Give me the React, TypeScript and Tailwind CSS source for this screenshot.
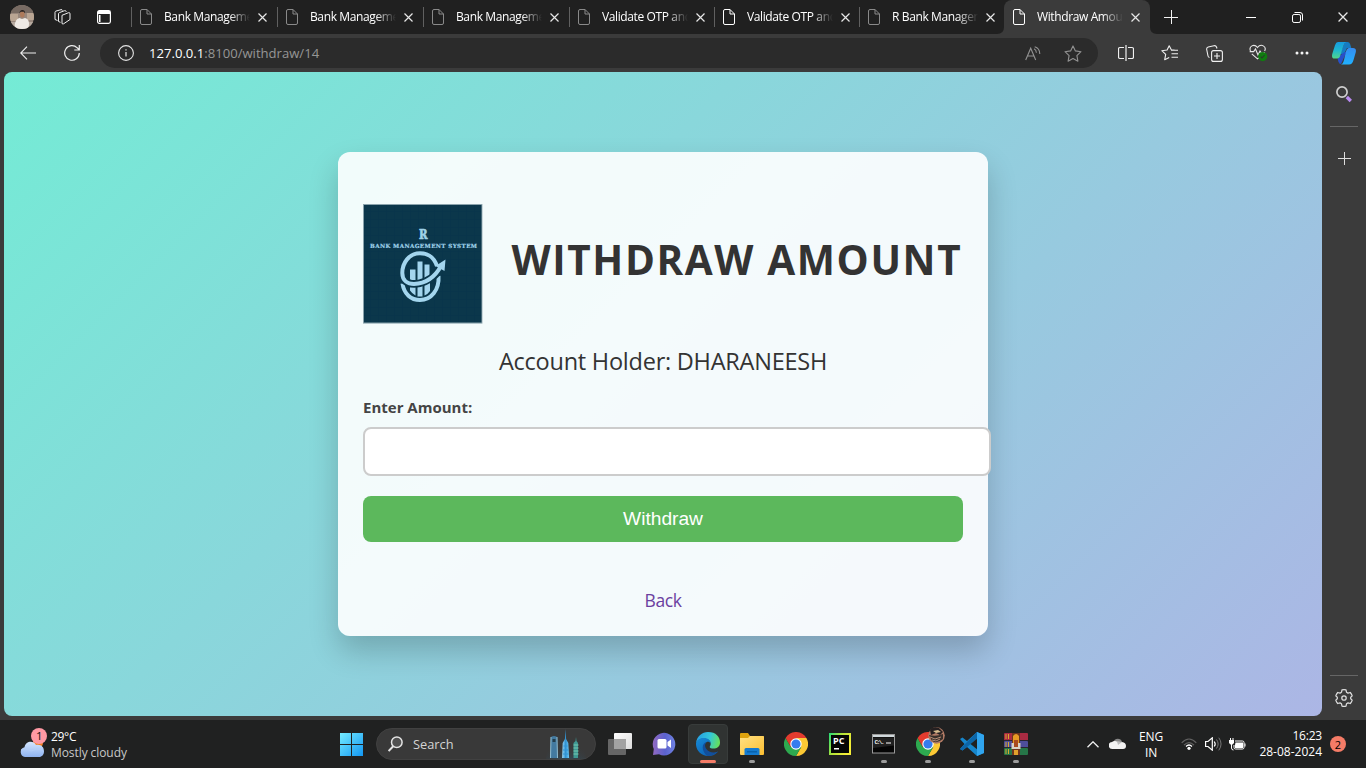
import type { ReactNode } from "react";

const tabs = [
  { title: "Bank Management", w: "w-[146px]", icon: "#8a8a8a" },
  { title: "Bank Management", w: "w-[146px]", icon: "#8a8a8a" },
  { title: "Bank Management", w: "w-[146px]", icon: "#8a8a8a" },
  { title: "Validate OTP and", w: "w-[145px]", icon: "#8a8a8a" },
  { title: "Validate OTP and", w: "w-[145px]", icon: "#ffffff" },
  { title: "R Bank Management", w: "w-[145px]", icon: "#8a8a8a" },
];

function DocIcon({ color }: { color: string }) {
  return (
    <svg width="12" height="16" viewBox="0 0 12 16" fill="none" stroke={color} className="shrink-0">
      <path d="M2 .5h5l4.5 4.5v9a1.5 1.5 0 0 1-1.5 1.5H2A1.5 1.5 0 0 1 .5 14V2A1.5 1.5 0 0 1 2 .5ZM7 .5V5h4.5" />
    </svg>
  );
}

function CloseIcon({ size = 9 }: { size?: number }) {
  return (
    <svg width={size} height={size} viewBox="0 0 9 9" stroke="#e8e8e8" strokeWidth="1.15" className="shrink-0">
      <path d="M.5.5l8 8M8.5.5l-8 8" />
    </svg>
  );
}

function TabBody({ title, icon }: { title: string; icon: string }) {
  return (
    <>
      <DocIcon color={icon} />
      <span className="ml-3 w-[86px] shrink-0 overflow-hidden whitespace-nowrap text-[12px] leading-[16px] tracking-[-0.38px] text-white [mask-image:linear-gradient(to_right,black_76%,transparent_100%)]">
        {title}
      </span>
      <span className="ml-2 flex">
        <CloseIcon />
      </span>
    </>
  );
}

function TabStrip() {
  return (
    <div className="flex h-[34px] bg-[#202020]">
      <div className="flex w-[131px] items-center">
        <svg width="24" height="24" viewBox="0 0 24 24" className="ml-[10px]">
          <defs>
            <clipPath id="avatar"><circle cx="12" cy="12" r="12" /></clipPath>
          </defs>
          <g clipPath="url(#avatar)">
            <rect width="24" height="24" fill="#98877c" />
            <rect width="24" height="8" fill="#776a62" />
            <path d="M0 9h8v7H0zM17 8h7v7h-7z" fill="#b9a593" />
            <path d="M0 17h24v7H0z" fill="#b7aaa0" />
            <path d="M5 24c-1-6 1-10 4.500-11l2.500 1 3-1c4 1 5 5 3 11Z" fill="#eee9e4" />
            <ellipse cx="12.300" cy="9.300" rx="2.300" ry="3.300" fill="#ad7a5b" />
            <path d="M9.600 8.500c-.8-4.500 6-5 5.500 0l-1.200-1.700H10.500Z" fill="#292321" />
          </g>
        </svg>
        <svg width="17" height="16" viewBox="0 0 17 16" fill="none" stroke="#eee" className="ml-[20px]">
          <path d="M8 6.300 14.500 3.700Q16 3.300 16 4.800V10.500L9.600 14.800Q8 15.600 8 14Z" />
          <path d="M4.500 12.500V4.800Q4.500 4 5.400 3.600L10.500 1.700Q12 1.300 12.300 2.800M1 10.500V3.300Q1 2.500 1.900 2.100L7 .7Q8.200.4 8.600 1.500M4.500 12.500l2 .8M1 10.500l2.500 1" />
        </svg>
        <svg width="14" height="14" viewBox="0 0 14 14" className="ml-[26px]">
          <rect x=".6" y=".6" width="12.800" height="12.800" rx="1.800" fill="none" stroke="#fff" strokeWidth="1.200" />
          <path d="M1 1h12v3H1zM2 5h1.500v7H2z" fill="#fff" />
        </svg>
      </div>
      {tabs.map((t, i) => (
        <div key={i} className={`flex shrink-0 items-center ${t.w}`}>
          <div className="mr-2 h-5 w-px bg-[#606060]" />
          <TabBody {...t} />
        </div>
      ))}
      <div className="relative flex w-[146px] shrink-0 items-center rounded-t-lg bg-[#3b3b3b] pl-[9px]">
        <svg width="7" height="7" viewBox="0 0 7 7" className="absolute -left-[7px] bottom-0"><path d="M7 0v7H0Q7 7 7 0Z" fill="#3b3b3b" /></svg>
        <svg width="7" height="7" viewBox="0 0 7 7" className="absolute -right-[7px] bottom-0"><path d="M0 0v7h7Q0 7 0 0Z" fill="#3b3b3b" /></svg>
        <TabBody title="Withdraw Amount" icon="#ffffff" />
      </div>
      <div className="flex flex-1 items-center">
        <svg width="14" height="14" viewBox="0 0 14 14" stroke="#f2f2f2" className="ml-[14px]"><path d="M7.500 0v14M0 7.500h14" /></svg>
        <svg width="10" height="10" viewBox="0 0 10 10" stroke="#fff" className="ml-[68px]"><path d="M0 5.500h10" /></svg>
        <svg width="11" height="11" viewBox="0 0 11 11" fill="none" stroke="#fff" className="ml-[36px]"><rect x=".5" y="2.500" width="8" height="8" rx="1.600" /><path d="M2.500.5h5.500a2.500 2.500 0 0 1 2.500 2.500v5.500" /></svg>
        <span className="ml-[35px] flex"><CloseIcon size={10} /></span>
      </div>
    </div>
  );
}

function ToolCell({ children, w = "w-11" }: { children: ReactNode; w?: string }) {
  return <div className={`flex h-full shrink-0 items-center justify-center ${w}`}>{children}</div>;
}

function Toolbar() {
  return (
    <div className="flex h-[38px] items-center bg-[#3b3b3b]">
      <div className="flex h-full w-[100px] pl-[6px]">
        <ToolCell>
          <svg width="16" height="14" viewBox="0 0 16 14" fill="none" stroke="#eee" strokeWidth="1.100"><path d="M16 7H1M7 .7.700 7 7 13.300" /></svg>
        </ToolCell>
        <ToolCell>
          <svg width="16" height="16" viewBox="0 0 16 16" fill="none" stroke="#eee" strokeWidth="1.200"><path d="M15.300 8A7.300 7.300 0 1 1 13.200 2.800L15 4.500M15.300 0v5h-5" /></svg>
        </ToolCell>
      </div>
      <div className="flex h-[30px] w-[998px] items-center rounded-full bg-[#2b2b2b] pl-[18px]">
        <svg width="16" height="16" viewBox="0 0 16 16" fill="none" stroke="#e4e4e4"><circle cx="8" cy="8" r="7.400" strokeWidth="1.100" /><path d="M8 7v4.500M8 4.300v1.300" strokeWidth="1.200" /></svg>
        <span className="ml-[15px] flex-1 text-[13.100px] leading-[18px] text-[#969696]">
          <span className="text-white">127.0.0.1</span>:8100/withdraw/14
        </span>
        <svg width="16" height="15" viewBox="0 0 16 15" fill="none" stroke="#929292" strokeWidth="1.100" className="mr-[23px]"><path d="M.7 14 5.700 2.200 10.700 14M2.300 10h6.800M9 2.800q2.300 1.100 2.400 4M9.700.7q5 1.500 5.100 7.200" /></svg>
        <svg width="18" height="17" viewBox="0 0 18 17" fill="none" stroke="#929292" strokeWidth="1.100" strokeLinejoin="round" className="mr-[16px]"><path d="m9 .9 2.400 5 5.600.8-4.100 3.900 1 5.600L9 13.600l-4.900 2.600 1-5.600L1 6.700l5.600-.8Z" /></svg>
      </div>
      <div className="flex h-full pl-[6px]">
        <ToolCell>
          <svg width="16" height="16" viewBox="0 0 16 16" fill="none" stroke="#f0f0f0" className="-ml-px"><path d="M6 2.500H2A1.500 1.500 0 0 0 .5 4v8A1.500 1.500 0 0 0 2 13.500h4M10 2.500h4A1.500 1.500 0 0 1 15.500 4v8a1.500 1.500 0 0 1-1.500 1.500h-4M8 0v16" strokeWidth="1.200" /></svg>
        </ToolCell>
        <ToolCell>
          <svg width="17" height="16" viewBox="0 0 17 16" fill="none" stroke="#f0f0f0" strokeLinejoin="round" strokeWidth="1.100" className="-ml-px"><path d="M13.500 5 10.300 4.700 8.200.700 6.100 5 .8 5.700l3.900 3.700-1 5.300 4.500-2.200M10 5.300h7M10.500 8.800h6.500M10.500 12.300h6.500" /></svg>
        </ToolCell>
        <ToolCell>
          <svg width="17" height="17" viewBox="0 0 17 17" fill="none" stroke="#f0f0f0" strokeWidth="1.100"><rect x="5.600" y="5.600" width="10.800" height="10.800" rx="2" /><path d="M11 8v6M8 11h6M3.500 12.500A2 2 0 0 1 2 11L.7 4.500A2.200 2.200 0 0 1 2.200 2L8 .700A2.200 2.200 0 0 1 10.500 2L11 3.500" /></svg>
        </ToolCell>
        <ToolCell>
          <svg width="19" height="18" viewBox="0 0 19 18" fill="none" stroke="#e8e8e8" strokeWidth="1.100" className="ml-px"><path d="M1.500 7C-.5 2.500 5-1 8.500 3.500 12-1 18 2.500 15.600 7M.7 7.600h4L6.500 5 9 11l2-4 1 1.500h4M2.800 9.800l5.700 5 1.500-1" /><circle cx="13.700" cy="12.600" r="4.600" fill="#107c10" stroke="none" /><path d="m11.700 12.600 1.300 1.400 2.600-3" stroke="#2b3b2b" /></svg>
        </ToolCell>
        <ToolCell>
          <svg width="14" height="4" viewBox="0 0 14 4" fill="#f5f5f5"><circle cx="2" cy="2" r="1.500" /><circle cx="7" cy="2" r="1.500" /><circle cx="12" cy="2" r="1.500" /></svg>
        </ToolCell>
        <ToolCell w="w-[40px]">
          <svg width="24" height="23" viewBox="0 0 24 23">
            <defs>
              <linearGradient id="cpA" x1="0" y1="0" x2="0" y2="1"><stop stopColor="#169be0" /><stop offset=".5" stopColor="#1fb8cf" /><stop offset="1" stopColor="#52d689" /></linearGradient>
              <linearGradient id="cpB" x1="0" y1="0" x2="0" y2="1"><stop stopColor="#368cf0" /><stop offset="1" stopColor="#20b1ff" /></linearGradient>
            </defs>
            <path d="M13 0h2.500q2 0 2.700 2.200L19.300 6H15L12 12l-4 0Z" fill="#167bc2" />
            <path d="M11 11 15 9 9 22H9q-2 0-2.700-2.500L5.500 16Z" fill="#2750c9" />
            <path d="M6 0h8q-2 1-3 5L8.500 13q-1 3.500-3.500 3.500H2.500Q-1 16.500.4 11.500L3 3.200Q4 0 6 0Z" fill="url(#cpA)" />
            <path d="M17 6h4q3.800 0 2.700 4.500L21.500 18q-1.200 4.500-4.500 4.500H9q2-.5 3-4.500L14 9.500Q15 6 17 6Z" fill="url(#cpB)" />
          </svg>
        </ToolCell>
      </div>
    </div>
  );
}

function BankLogo() {
  return (
    <svg width="120" height="120" viewBox="0 0 120 120" className="shrink-0">
      <defs>
        <pattern id="weave" width="8" height="8" patternUnits="userSpaceOnUse"><rect width="8" height="8" fill="#0b374b" /><path d="M7.500 0v8M0 7.500h8" stroke="#09334a" strokeWidth=".7" /></pattern>
      </defs>
      <rect width="119.400" height="119.600" fill="#8aa3ac" />
      <rect x="1" y="1" width="117.500" height="117.500" fill="url(#weave)" />
      <g fill="#9fd2e9" stroke="#9fd2e9" fontFamily="'DejaVu Serif', serif" fontWeight="700">
        <text x="56" y="35.200" fontSize="12" strokeWidth=".7" textLength="8.500" lengthAdjust="spacingAndGlyphs">R</text>
        <text x="7" y="43.800" fontSize="5.600" strokeWidth=".2" textLength="107" lengthAdjust="spacing">BANK MANAGEMENT SYSTEM</text>
      </g>
      <path fill="#a3d5ee" d="M47 65.500h5.500V76H47ZM54.500 57.500h5V76h-5ZM61.500 60.500h5V76h-5ZM47 83h5.500v8.500Q49 89.500 47 86.500ZM54.500 82h5V92.500h-5ZM61.500 79h5.500v8q-2 3-5.500 4.500Z" />
      <g fill="none" stroke="#a3d5ee" strokeWidth="4">
        <path d="M39.500 79.500C41 90 48 96 57 96 68 96 76.500 86 75.500 72" />
        <path d="M41 76C48 83 64 81 77 66" stroke="#0b374b" strokeWidth="7.500" />
        <path d="M74 62C70 51 63.500 49.300 57 49.300 46 49.300 39.300 59 39.300 69 39.300 77 45 80 51 80 63 79.500 72 73 78 62" />
      </g>
      <path d="M72.500 62 82.500 55.500 81.500 67Z" fill="#a3d5ee" />
    </svg>
  );
}

function WithdrawCard() {
  return (
    <div className="flex h-[484px] w-[650px] flex-col rounded-xl bg-white/90 px-[25px] pt-[52px] shadow-[0_15px_30px_rgba(0,0,0,0.2)]">
      <div className="flex h-[120px] items-center">
        <BankLogo />
        <h1 className="mb-[9px] ml-[28.500px] whitespace-nowrap text-[40.500px] font-bold leading-[54px] tracking-[1.600px] text-[#333333]">WITHDRAW AMOUNT</h1>
      </div>
      <p className="mt-[21px] text-center text-[23.500px] leading-[32px] tracking-[-0.240px] text-[#333333]">Account Holder: DHARANEESH</p>
      <label className="mt-[20px] text-[15px] font-bold leading-[21px] text-[#444444]">Enter Amount:</label>
      <input aria-label="Enter Amount" className="mt-[9px] h-[49px] w-[628px] shrink-0 rounded-lg border-2 border-[#cccccc] bg-white px-3" />
      <button className="mt-5 h-[46px] w-full shrink-0 rounded-lg pt-px bg-[#5cb85c] font-['Liberation_Sans',sans-serif] text-[19.200px] text-white">Withdraw</button>
      <a className="mt-[45px] text-center text-[17.500px] leading-[26px] tracking-[-0.450px] text-[#6b3fa0]">Back</a>
    </div>
  );
}

function SideBar() {
  return (
    <div className="flex w-11 flex-col items-center">
      <svg width="17" height="17" viewBox="0 0 17 17" fill="none" className="mt-[14px]"><circle cx="6" cy="6" r="5.100" stroke="#cfcfcf" strokeWidth="1.700" /><path d="m10.800 11 4 4" stroke="#b98af0" strokeWidth="3.300" /></svg>
      <div className="mt-[23px] h-px w-7 bg-[#666]" />
      <svg width="13" height="13" viewBox="0 0 13 13" stroke="#ddd" className="mt-[25px]"><path d="M6.500 0v13M0 6.500h13" /></svg>
      <div className="mt-auto h-px w-7 bg-[#666]" />
      <svg width="18" height="18" viewBox="0 0 18 18" fill="none" stroke="#ddd" strokeWidth="1.250" strokeLinejoin="round" className="mb-[13px] mt-[13px]"><path d="M7 .9Q9 .4 11 .9L11.500 3.200 13 4.100 15.300 3.500Q16.600 5 17.200 6.900L15.700 8.200V9.800L17.200 11.100Q16.600 13 15.300 14.500L13 13.900 11.500 14.800 11 17.100Q9 17.600 7 17.100L6.500 14.800 5 13.900 2.700 14.500Q1.400 13 .8 11.100L2.300 9.800V8.200L.8 6.900Q1.400 5 2.700 3.500L5 4.100 6.500 3.200Z" /><circle cx="9" cy="9" r="2.200" /></svg>
    </div>
  );
}

function Chrome() {
  return (
    <svg width="24" height="24" viewBox="0 0 24 24">
      <path d="M12 6h10.400A12 12 0 0 1 12 24l5.200-9Z" fill="#fcc934" />
      <path d="M6.800 15 1.600 6A12 12 0 0 0 12 24l5.200-9Z" fill="#2da94f" />
      <path d="M1.600 6 6.800 15 12 6h10.400A12 12 0 0 0 1.600 6Z" fill="#e33b2e" />
      <circle cx="12" cy="12" r="5.700" fill="#fff" /><circle cx="12" cy="12" r="4.600" fill="#367ced" />
    </svg>
  );
}

function AppCell({ children, mark }: { children: ReactNode; mark?: "dot" | "active" }) {
  return (
    <div className="relative flex h-12 w-11 shrink-0 items-center justify-center">
      {mark === "active" && <div className="absolute inset-x-[2px] bottom-1 top-1 rounded border border-[#383c3b] bg-[#303332]" />}
      <div className="relative flex">{children}</div>
      {mark === "dot" && <div className="absolute bottom-[5px] h-[3px] w-[6px] rounded-full bg-[#9c9c9c]" />}
      {mark === "active" && <div className="absolute bottom-[5px] h-[3px] w-4 rounded-full bg-[#f57c67]" />}
    </div>
  );
}

function Taskbar() {
  return (
    <div className="flex h-12 items-center bg-[#202121]">
      <div className="flex w-[340px] items-center">
        <svg width="28" height="30" viewBox="0 0 28 30" className="mb-[3px] ml-5">
          <defs><linearGradient id="cl" x1="0" y1="0" x2="0" y2="1"><stop stopColor="#d3e6ff" /><stop offset="1" stopColor="#8fb3f0" /></linearGradient></defs>
          <circle cx="18" cy="15" r="5" fill="#ef7d20" />
          <path d="M5 29a5 5 0 0 1-.5-9.800C5.500 13 13.500 12 16 17c5-1 8 2 8 6.500 0 3-2 5.500-5 5.500Z" fill="url(#cl)" />
          <path d="M1 22q5-3 10 1 5-3 12-1" stroke="#b4cff9" fill="none" />
          <circle cx="19" cy="8" r="8" fill="#ff99a4" />
          <text x="16" y="12" fontSize="11.500" fill="#111" fontFamily="'Open Sans', sans-serif">1</text>
        </svg>
        <div className="ml-[3px] pt-[2px] text-[12px] leading-[16px]">
          <div className="tracking-[-0.3px] text-white">29°C</div>
          <div className="tracking-[-0.080px] text-[#c8c8c8]">Mostly cloudy</div>
        </div>
      </div>
      <svg width="23" height="23" viewBox="0 0 23 23">
        <defs><linearGradient id="win" x1="0" y1="0" x2="1" y2="1"><stop stopColor="#75ecff" /><stop offset="1" stopColor="#1296f2" /></linearGradient></defs>
        <path d="M0 0h11v11H0zM12 0h11v11H12zM0 12h11v11H0zM12 12h11v11H12z" fill="url(#win)" />
      </svg>
      <div className="ml-[13px] flex h-8 w-[220px] items-center rounded-full border border-[#414141] bg-[#393939] pl-[11px]">
        <svg width="15" height="16" viewBox="0 0 15 16" fill="none" stroke="#e4e4e4" strokeWidth="1.500"><circle cx="8.800" cy="6.200" r="5.300" fill="#505050" /><path d="M5.200 10.200.600 15" strokeWidth="2" /></svg>
        <span className="ml-[10px] flex-1 text-[12.800px] leading-[18px] text-[#d4d4d4]">Search</span>
        <svg width="40" height="30" viewBox="0 0 40 30" className="mr-[9px]">
          <defs>
            <radialGradient id="glow" cx=".5" cy="1" r=".9"><stop stopColor="#3787a8" /><stop offset=".55" stopColor="#315265" stopOpacity=".6" /><stop offset="1" stopColor="#393939" stopOpacity="0" /></radialGradient>
            <linearGradient id="tower"><stop stopColor="#9ad9fa" /><stop offset=".5" stopColor="#2f91d1" /><stop offset="1" stopColor="#70caf7" /></linearGradient>
          </defs>
          <ellipse cx="20" cy="30" rx="20" ry="20" fill="url(#glow)" />
          <path d="M5 8q3-2 6 0l.5 21H4.500Z" fill="#437aa0" /><path d="M5 8l-.5 21M11 8l.5 21" stroke="#91bdd1" /><path d="M6.500 10h3v3h-3z" fill="#243e4d" />
          <path d="m19.500 0 .6 10 2.200 4 .8 15h-7l.6-15 2.200-4Z" fill="url(#tower)" /><path d="M17.500 17h4M17 21h5.500M17 25h5.500" stroke="#3194d4" />
          <path d="m30 8 .5 4 1.500 2v15h-4.500V14l2-2Z" fill="#3f9993" /><path d="M27.500 16h5M27.500 19h5M27.500 22h5M27.500 25h5" stroke="#79c9b1" />
        </svg>
      </div>
      <div className="ml-[2px] flex">
        <AppCell>
          <svg width="24" height="22" viewBox="0 0 24 22"><defs><linearGradient id="tv" x1="0" y1="0" x2="1" y2="1"><stop stopColor="#fff" /><stop offset="1" stopColor="#dcdcdc" /></linearGradient></defs><rect x="6" width="18" height="16" rx="1" fill="url(#tv)" /><rect y="6" width="18" height="16" rx="1" fill="#666" /><path d="M6 6h12v10H6z" fill="#a2a2a2" /></svg>
        </AppCell>
        <AppCell>
          <svg width="24" height="24" viewBox="0 0 24 24"><defs><linearGradient id="chat" x1="0" y1="0" x2="1" y2="0"><stop stopColor="#9269c0" /><stop offset=".55" stopColor="#5b62ce" /><stop offset="1" stopColor="#7083e2" /></linearGradient></defs><path d="M1 23 1.800 17A11.300 11.300 0 1 1 7 22.300Z" fill="url(#chat)" /><rect x="5.500" y="7" width="9" height="9.500" rx="1.500" fill="#fff" /><path d="m15.500 10 3.500-2.500v8.500l-3.500-2.500Z" fill="#fff" /></svg>
        </AppCell>
        <AppCell mark="active">
          <svg width="24" height="24" viewBox="0 0 24 24">
            <defs>
              <linearGradient id="edT" x1="0" y1=".3" x2="1" y2=".5"><stop stopColor="#269ee3" /><stop offset=".55" stopColor="#32c6da" /><stop offset="1" stopColor="#66e05a" /></linearGradient>
              <linearGradient id="edB" x1="0" y1="0" x2=".8" y2="1"><stop stopColor="#168bd8" /><stop offset="1" stopColor="#0c5eb1" /></linearGradient>
            </defs>
            <path d="M0 11C1 4 6 0 12 0c8 0 12 5 12 10.500 0 4-3 6-6.500 6-2 0-3.800-.6-3.800-1.600 0-.7 1-1.300 1-3.200 0-3-3-5.200-6.700-5.200C4 6.500 1 8.500 0 11Z" fill="url(#edT)" />
            <path d="M0 11c1-3 4-5 8-5 3.500 0 6.700 2.200 6.700 5.500C14 10 12 9.500 10.800 10 7 12 7.500 18 13.500 20.500c3 1.300 6.700.5 8.500-.9C19 23.500 15.500 24 12 24 5 24-.5 18 0 11Z" fill="url(#edB)" />
            <path d="M10.800 10C5 11 5.500 20 11.500 23.900 16 24.300 20 22 22 19.600c-4 2-9.500 1-12-3-1.700-2.800-.8-5.500.8-6.600Z" fill="#124f9b" />
          </svg>
        </AppCell>
        <AppCell mark="dot">
          <svg width="24" height="22" viewBox="0 0 24 22"><defs><linearGradient id="fold" x1="0" y1="0" x2="1" y2="1"><stop stopColor="#ffe184" /><stop offset="1" stopColor="#fdbf31" /></linearGradient></defs><path d="M0 1Q0 0 1 0h7l2 3h13q1 0 1 1v4H0Z" fill="#dda20d" /><path d="M0 5h8l2-2h13q1 0 1 1v17q0 1-1 1H1q-1 0-1-1Z" fill="url(#fold)" /><path d="M4.500 16.500q0-1.500 1.500-1.500h12q1.500 0 1.500 1.500V22h-15Z" fill="#157bd0" /><path d="M7 18h10v1.500H7z" fill="#0862ad" /></svg>
        </AppCell>
        <AppCell><Chrome /></AppCell>
        <AppCell>
          <svg width="22" height="22" viewBox="0 0 22 22"><defs><linearGradient id="py" x1="0" y1="0" x2="1" y2=".5"><stop stopColor="#21db79" /><stop offset=".5" stopColor="#b5e438" /><stop offset="1" stopColor="#f5ee38" /></linearGradient></defs><rect width="22" height="22" fill="url(#py)" /><rect x="2" y="2" width="18" height="18" fill="#050705" /><text x="4" y="11" fill="#fff" fontFamily="'Open Sans', sans-serif" fontSize="9" fontWeight="700" textLength="11.500">PC</text><path d="M5 15h5v1.500H5z" fill="#fff" /></svg>
        </AppCell>
        <AppCell mark="dot">
          <svg width="24" height="20" viewBox="0 0 24 20"><rect x=".5" y=".5" width="22" height="18.500" fill="#050505" stroke="#9a9a9a" /><path d="M1 1h21v2H1z" fill="#d0d8dc" /><path d="M1 3.500h21v8L1 14Z" fill="#202020" /><text x="2.500" y="9.500" fill="#f5f5f5" fontSize="6" fontFamily="'Liberation Mono', monospace" fontWeight="700" textLength="10">C:\.</text><path d="M14 9h5" stroke="#fff" /></svg>
        </AppCell>
        <AppCell mark="dot">
          <Chrome />
          <svg width="17" height="17" viewBox="0 0 17 17" className="absolute -right-[5px] -top-[5px]"><circle cx="8.500" cy="8.500" r="8.300" fill="#b27b65" /><path d="M2 3q3-4 9-2l4 4-3 3-4-2-5 2Z" fill="#252021" /><path d="m5 4 5-1 3 2-5 1Z" fill="#d7bc8e" /><path d="M1 8q7 2 14-1v5q-6 5-11 2Z" fill="#38302b" /><path d="m2 10 5 2 6-2M4 13l4 1 4-2" stroke="#b88d75" fill="none" /></svg>
        </AppCell>
        <AppCell mark="dot">
          <svg width="24" height="24" viewBox="0 0 24 24"><path d="M17 0 24 3V21L17 24 7 15 2.500 18.500 0 17 4.500 12 0 7 2.500 5.500 7 9Z" fill="#1686cc" /><path d="M0 17 17 0v7L2.500 18.500Z" fill="#0c65a7" /><path d="m17 0 7 3v18l-7 3Z" fill="#30a5ef" /><path d="M17 6.800V17.200L10.500 12Z" fill="#202121" /></svg>
        </AppCell>
        <AppCell mark="dot">
          <svg width="24" height="22" viewBox="0 0 24 22"><rect width="24" height="8" rx="1" fill="#a92b42" /><rect y="8" width="24" height="7" rx="1" fill="#4e4e9b" /><rect y="15" width="24" height="7" rx="1" fill="#267648" /><path d="M0 7.500h24M0 14.500h24" stroke="#292532" /><path d="M2 1v5M4.500 1v5M2 9v5M4.500 9v5M2 16v5M4.500 16v5" stroke="#d8a82d" /><path d="M8 0h8v22H8z" fill="#70351e" /><path d="M9 3q3-4 6 0v8H9Z" fill="#e89a24" /><path d="M7.500 10h9v6h-9z" fill="#d9d2c6" /><path d="M10 7h4v7h-4z" fill="#a84a20" /><path d="M10 17h4v5h-4z" fill="#e0a12c" /></svg>
        </AppCell>
      </div>
      <div className="flex flex-1 items-center">
        <svg width="12" height="7" viewBox="0 0 12 7" fill="none" stroke="#f2f2f2" strokeWidth="1.300" className="ml-[49px]"><path d="m.5 6.300 5.500-5.500 5.500 5.500" /></svg>
        <svg width="17" height="12" viewBox="0 0 17 12" className="ml-[10px]"><path d="M4 5C5-.500 12-.500 13 4l-8 3Z" fill="#888" /><path d="M3.500 11A3.500 3.500 0 0 1 3 4q3-2 6 .5l4-.5q4 .5 4 4 0 3-3 3Z" fill="#f3f3f3" /><path d="m8 3 5 1-4 3Z" fill="#bcbcbc" /></svg>
        <div className="ml-[9px] w-[32px] pt-[2px] text-center text-[12px] leading-[16px] tracking-[-0.2px] text-white">ENG<br />IN</div>
        <svg width="16" height="12" viewBox="0 0 16 12" fill="none" strokeWidth="1.200" className="ml-[14px]"><path d="M.7 4.800Q8-2.800 15.300 4.800M3 7.100q5-5 10 0" stroke="#626262" /><path d="M5 8.500q3-3 6 0" stroke="#fff" /><circle cx="8" cy="10.300" r="1.600" fill="#fff" /></svg>
        <svg width="17" height="14" viewBox="0 0 17 14" fill="none" className="ml-[8px]"><path d="M.6 4.500H3L7.300.800v12.400L3 9.500H.6Z" stroke="#fff" strokeWidth="1.200" /><path d="M9.200 4.500q2 2.500 0 5" stroke="#fff" strokeWidth="1.200" /><path d="M11.500 2.500q3.300 4.500 0 9M13.800.700q4.500 6.300 0 12.600" stroke="#777" /></svg>
        <svg width="17" height="13" viewBox="0 0 17 13" fill="none" className="ml-[7px]"><path d="M6 3h7.500Q15 3 15 4.500v5q0 1.500-1.500 1.500h-7Q5 11 5 9.500V7" stroke="#fff" /><path d="M6.500 4.500h7.500v5.500H6V7Z" fill="#fff" /><path d="M15.500 5.500h1v3h-1z" fill="#fff" /><path d="M0 2h5v3L3.500 6.500h-2L0 5ZM1 0h1v2H1zM3.500 0h1v2h-1z" fill="#fff" /><path d="M2.500 6v4q0 2 2 2" stroke="#fff" /></svg>
        <div className="ml-auto text-right text-[12px] leading-[16px] text-white"><span className="tracking-[-0.2px]">16:23</span><br />28-08-2024</div>
        <div className="ml-2 mr-5 flex h-4 w-4 items-center justify-center rounded-full bg-[#f57c67] text-[11px] leading-none text-black">2</div>
      </div>
    </div>
  );
}

export default function App() {
  return (
    <div className="flex h-screen w-full flex-col overflow-hidden bg-[#3b3b3b] font-['Open_Sans','Noto_Sans',sans-serif]">
      <TabStrip />
      <Toolbar />
      <div className="flex h-[648px] shrink-0 pl-1">
        <main className="flex h-[644px] w-[1318px] items-center justify-center overflow-hidden rounded-lg bg-[linear-gradient(135deg,#74ebd5,#acb6e5)]">
          <WithdrawCard />
        </main>
        <SideBar />
      </div>
      <Taskbar />
    </div>
  );
}
